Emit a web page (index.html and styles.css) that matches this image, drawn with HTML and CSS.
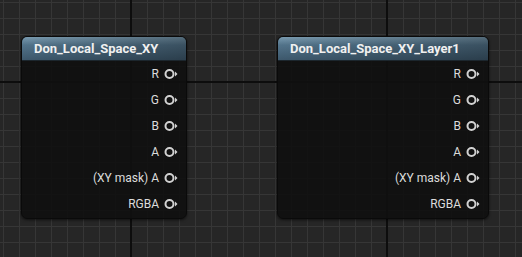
FILE: index.html
```html
<!DOCTYPE html>
<html lang="en">
<head>
  <meta charset="UTF-8">
  <title>Material Graph</title>
  <link rel="stylesheet" href="styles.css">
</head>
<body>
  <div class="graph">
    <div class="node node-small">
      <div class="node-title">Don_Local_Space_XY</div>
      <div class="node-pins">
        <div class="pin"><span>R</span><svg width="14" height="12" viewBox="0 0 14 12"><circle cx="5.5" cy="6" r="4" /><polygon points="11,3.5 13.5,6 11,8.5" /></svg></div>
        <div class="pin"><span>G</span><svg width="14" height="12" viewBox="0 0 14 12"><circle cx="5.5" cy="6" r="4" /><polygon points="11,3.5 13.5,6 11,8.5" /></svg></div>
        <div class="pin"><span>B</span><svg width="14" height="12" viewBox="0 0 14 12"><circle cx="5.5" cy="6" r="4" /><polygon points="11,3.5 13.5,6 11,8.5" /></svg></div>
        <div class="pin"><span>A</span><svg width="14" height="12" viewBox="0 0 14 12"><circle cx="5.5" cy="6" r="4" /><polygon points="11,3.5 13.5,6 11,8.5" /></svg></div>
        <div class="pin"><span>(XY mask) A</span><svg width="14" height="12" viewBox="0 0 14 12"><circle cx="5.5" cy="6" r="4" /><polygon points="11,3.5 13.5,6 11,8.5" /></svg></div>
        <div class="pin"><span>RGBA</span><svg width="14" height="12" viewBox="0 0 14 12"><circle cx="5.5" cy="6" r="4" /><polygon points="11,3.5 13.5,6 11,8.5" /></svg></div>
      </div>
    </div>

    <div class="node node-wide">
      <div class="node-title">Don_Local_Space_XY_Layer1</div>
      <div class="node-pins">
        <div class="pin"><span>R</span><svg width="14" height="12" viewBox="0 0 14 12"><circle cx="5.5" cy="6" r="4" /><polygon points="11,3.5 13.5,6 11,8.5" /></svg></div>
        <div class="pin"><span>G</span><svg width="14" height="12" viewBox="0 0 14 12"><circle cx="5.5" cy="6" r="4" /><polygon points="11,3.5 13.5,6 11,8.5" /></svg></div>
        <div class="pin"><span>B</span><svg width="14" height="12" viewBox="0 0 14 12"><circle cx="5.5" cy="6" r="4" /><polygon points="11,3.5 13.5,6 11,8.5" /></svg></div>
        <div class="pin"><span>A</span><svg width="14" height="12" viewBox="0 0 14 12"><circle cx="5.5" cy="6" r="4" /><polygon points="11,3.5 13.5,6 11,8.5" /></svg></div>
        <div class="pin"><span>(XY mask) A</span><svg width="14" height="12" viewBox="0 0 14 12"><circle cx="5.5" cy="6" r="4" /><polygon points="11,3.5 13.5,6 11,8.5" /></svg></div>
        <div class="pin"><span>RGBA</span><svg width="14" height="12" viewBox="0 0 14 12"><circle cx="5.5" cy="6" r="4" /><polygon points="11,3.5 13.5,6 11,8.5" /></svg></div>
      </div>
    </div>
  </div>
</body>
</html>
```

FILE: styles.css
```css
html, body {
  margin: 0;
  padding: 0;
  height: 100%;
}

body {
  font-family: Roboto, "Liberation Sans", sans-serif;
  background-color: #262626;
  /* major lines every 256px, minor every 16px */
  background-image:
    linear-gradient(to right, #0d0d0d 2px, transparent 2px),
    linear-gradient(to bottom, #0d0d0d 2px, transparent 2px),
    linear-gradient(to right, #363636 1px, transparent 1px),
    linear-gradient(to bottom, #363636 1px, transparent 1px);
  background-size: 256px 256px, 256px 256px, 16px 16px, 16px 16px;
  background-position: 130px 0, 0 81px, 3px 0, 0 2px;
  overflow: hidden;
}

.graph {
  display: flex;
  align-items: flex-start;
  gap: 90px;
  padding: 36px 0 0 21px;
}

.node {
  height: 183px;
  box-sizing: border-box;
  background-color: rgba(16, 16, 16, 0.9);
  border: 1px solid #0a0a0a;
  border-radius: 6px;
  box-shadow: 0 1px 3px rgba(0, 0, 0, 0.6);
  display: flex;
  flex-direction: column;
  overflow: hidden;
}

.node-small {
  width: 166px;
}

.node-wide {
  width: 212px;
}

.node-title {
  height: 23px;
  line-height: 24px;
  padding-left: 12px;
  color: #f0f0f0;
  font-size: 13px;
  font-weight: bold;
  background:
    linear-gradient(to right, rgba(0, 0, 0, 0) 0%, rgba(0, 0, 0, 0.3) 100%),
    linear-gradient(to bottom, #7a9bb0 0%, #52738a 35%, #3d586c 100%);
  border-bottom: 1px solid #1c262d;
}

.node-pins {
  display: flex;
  flex-direction: column;
  align-items: flex-end;
  padding: 0 8px 0 0;
}

.pin {
  height: 26px;
  display: flex;
  align-items: center;
  gap: 5px;
  color: #dcdcdc;
  font-size: 12px;
}

.pin svg circle {
  fill: none;
  stroke: #d2d2d2;
  stroke-width: 2;
}

.pin svg polygon {
  fill: #d2d2d2;
}
```
